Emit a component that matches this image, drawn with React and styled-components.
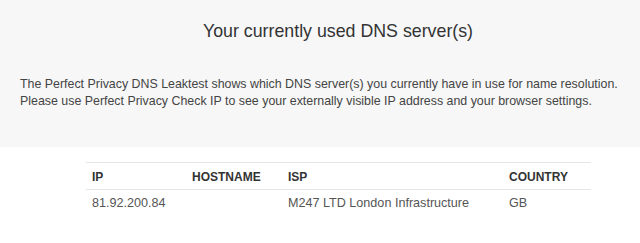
import React from 'react'
import styled, { createGlobalStyle } from 'styled-components'

const GlobalStyle = createGlobalStyle`
  html, body {
    margin: 0;
    padding: 0;
    background: #fff;
    font-family: "Liberation Sans", Arial, sans-serif;
  }
`

const Intro = styled.section`
  background: #f7f7f7;
  height: 147px;
  box-sizing: border-box;
  padding: 19px 20px 0;
`

const Title = styled.h1`
  margin: 0 0 0 36px;
  text-align: center;
  font-size: 17.8px;
  font-weight: 400;
  color: #333;
  line-height: 24px;
`

const Text = styled.p`
  margin: 33px 0 0;
  font-size: 12.4px;
  line-height: 17px;
  color: #444;
  white-space: nowrap;
`

const TableWrap = styled.div`
  padding: 15px 49px 0 86px;
`

const Table = styled.table`
  width: 100%;
  table-layout: fixed;
  border-collapse: collapse;
  font-size: 12.6px;
`

const Th = styled.th`
  text-align: left;
  font-weight: 700;
  font-size: 12px;
  color: #333;
  padding: 6px 6px 5px;
  height: 15px;
  border-top: 1px solid #e6e6e6;
  border-bottom: 1px solid #e6e6e6;
  width: ${p => p.$w || 'auto'};
`

const Td = styled.td`
  color: #555;
  padding: 6px 6px;
  line-height: 15px;
  white-space: nowrap;
`

const rows = [
  { ip: '81.92.200.84', host: '', isp: 'M247 LTD London Infrastructure', country: 'GB' },
]

export default function App() {
  return (
    <>
      <GlobalStyle />
      <Intro>
        <Title>Your currently used DNS server(s)</Title>
        <Text>
          The Perfect Privacy DNS Leaktest shows which DNS server(s) you currently have in use for name resolution.
          <br />
          Please use Perfect Privacy Check IP to see your externally visible IP address and your browser settings.
        </Text>
      </Intro>
      <TableWrap>
        <Table>
          <thead>
            <tr>
              <Th $w="88px">IP</Th>
              <Th $w="84px">HOSTNAME</Th>
              <Th $w="209px">ISP</Th>
              <Th>COUNTRY</Th>
            </tr>
          </thead>
          <tbody>
            {rows.map(r => (
              <tr key={r.ip}>
                <Td>{r.ip}</Td>
                <Td>{r.host}</Td>
                <Td>{r.isp}</Td>
                <Td>{r.country}</Td>
              </tr>
            ))}
          </tbody>
        </Table>
      </TableWrap>
    </>
  )
}
